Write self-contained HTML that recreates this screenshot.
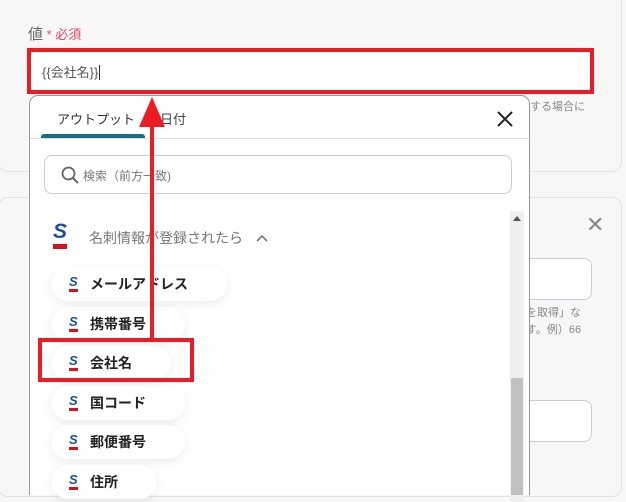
<!DOCTYPE html>
<html><head><meta charset="utf-8"><style>
*{margin:0;padding:0;box-sizing:border-box}
html,body{width:626px;height:502px;overflow:hidden}
body{background:#f7f7f7;font-family:"Liberation Sans","Noto Sans CJK JP",sans-serif;position:relative}
.abs{position:absolute}
.card{position:absolute;background:#f7f7f7;border:1px solid #e3e3e3;border-radius:10px}
.pill{position:absolute;left:51px;height:34px;background:#fff;border-radius:17px;box-shadow:0 3px 10px rgba(0,0,0,0.08);font-size:14px;color:#222;font-weight:bold;line-height:34px;padding-left:39px}
.s{position:absolute;left:18px;top:8px;width:9px;height:18px}
.s b{position:absolute;left:0;top:0;font:italic bold 13px/13px "Liberation Sans",sans-serif;color:#1a4fa0}
.s i{position:absolute;left:0;top:14px;width:9px;height:3px;background:#d7141c}
</style></head><body>
<div class="card" style="left:-2px;top:-10px;width:624px;height:182px"></div>
<div class="card" style="left:-2px;top:197px;width:624px;height:300px"></div>
<div class="abs" style="left:28px;top:23px;font-size:15px;color:#666">値<span style="color:#e8476a;font-size:13px"> * 必須</span></div>
<div class="abs" style="left:27px;top:48px;width:567px;height:46px;background:#fff;border:4px solid #ec1c24"></div>
<div class="abs" style="left:42px;top:62px;font-size:13px;color:#555">{{会社名}}<span style="border-left:1px solid #333;margin-left:1px"></span></div>
<div class="abs" style="left:530px;top:98px;font-size:11px;color:#888">する場合に</div>
<div class="abs" style="left:500px;top:258px;width:92px;height:42px;background:#fff;border:1px solid #ccd;border-radius:8px"></div>
<div class="abs" style="left:526px;top:305px;font-size:11px;color:#888;line-height:17px">を取得」な<br>す。例）66</div>
<div class="abs" style="left:500px;top:400px;width:92px;height:42px;background:#fff;border:1px solid #ccd;border-radius:8px"></div>
<div class="abs" style="left:586px;top:212px;font-size:22px;color:#888">✕</div>

<div class="abs" style="left:29px;top:95px;width:501px;height:400px;background:#fff;border:1px solid #999;border-bottom:none;border-radius:9px 9px 0 0"></div>
<div class="abs" style="left:57px;top:109px;font-size:13px;color:#333">アウトプット</div>
<div class="abs" style="left:160px;top:109px;font-size:13px;color:#444">日付</div>
<div class="abs" style="left:41px;top:134px;width:104px;height:5px;background:#196c82;border-radius:3px 3px 0 0"></div>
<div class="abs" style="left:30px;top:138px;width:499px;height:1px;background:#ddd"></div>
<svg class="abs" style="left:496px;top:110px" width="18" height="18"><path d="M2 2L16 16M16 2L2 16" stroke="#222" stroke-width="2"/></svg>
<div class="abs" style="left:44px;top:155px;width:468px;height:39px;border:1px solid #ccc;border-radius:8px"></div>
<svg class="abs" style="left:61px;top:166px" width="18" height="18"><circle cx="7.5" cy="7.5" r="6" fill="none" stroke="#666" stroke-width="1.8"/><path d="M12 12L17 17" stroke="#666" stroke-width="2"/></svg>
<div class="abs" style="left:83px;top:167px;font-size:12px;color:#777">検索（前方一致)</div>
<div class="abs" style="left:510px;top:211px;width:14px;height:291px;background:#f0f0f0"></div>
<div class="abs" style="left:513px;top:216px;width:0;height:0;border-left:4px solid transparent;border-right:4px solid transparent;border-bottom:5px solid #555"></div>
<div class="abs" style="left:511px;top:378px;width:12px;height:117px;background:#c1c1c1"></div>
<div class="abs" style="left:52px;top:222px;width:16px;height:28px">
<b style="position:absolute;left:1px;top:0;font:italic bold 21px/20px 'Liberation Sans',sans-serif;color:#1a4fa0">S</b>
<i style="position:absolute;left:1px;top:22px;width:14px;height:5px;background:#d7141c"></i></div>
<div class="abs" style="left:89px;top:228px;font-size:14px;color:#777">名刺情報が登録されたら</div>
<svg class="abs" style="left:256px;top:234px" width="12" height="8"><path d="M1 7L6 2L11 7" fill="none" stroke="#777" stroke-width="1.6"/></svg>

<div class="pill" style="top:267px;width:176px"><span class="s"><b>S</b><i></i></span>メールアドレス</div>
<div class="pill" style="top:307px;width:134px"><span class="s"><b>S</b><i></i></span>携帯番号</div>
<div class="pill" style="top:346px;width:120px"><span class="s"><b>S</b><i></i></span>会社名</div>
<div class="pill" style="top:386px;width:134px"><span class="s"><b>S</b><i></i></span>国コード</div>
<div class="pill" style="top:425px;width:134px"><span class="s"><b>S</b><i></i></span>郵便番号</div>
<div class="pill" style="top:465px;width:106px"><span class="s"><b>S</b><i></i></span>住所</div>

<div class="abs" style="left:38px;top:338px;width:156px;height:44px;border:4px solid #ec1c24"></div>
<div class="abs" style="left:150px;top:122px;width:4px;height:218px;background:#ec1c24"></div>
<svg class="abs" style="left:138px;top:96px" width="28" height="32"><path d="M14 1L27 31L1 31Z" fill="#ec1c24"/></svg>
</body></html>
